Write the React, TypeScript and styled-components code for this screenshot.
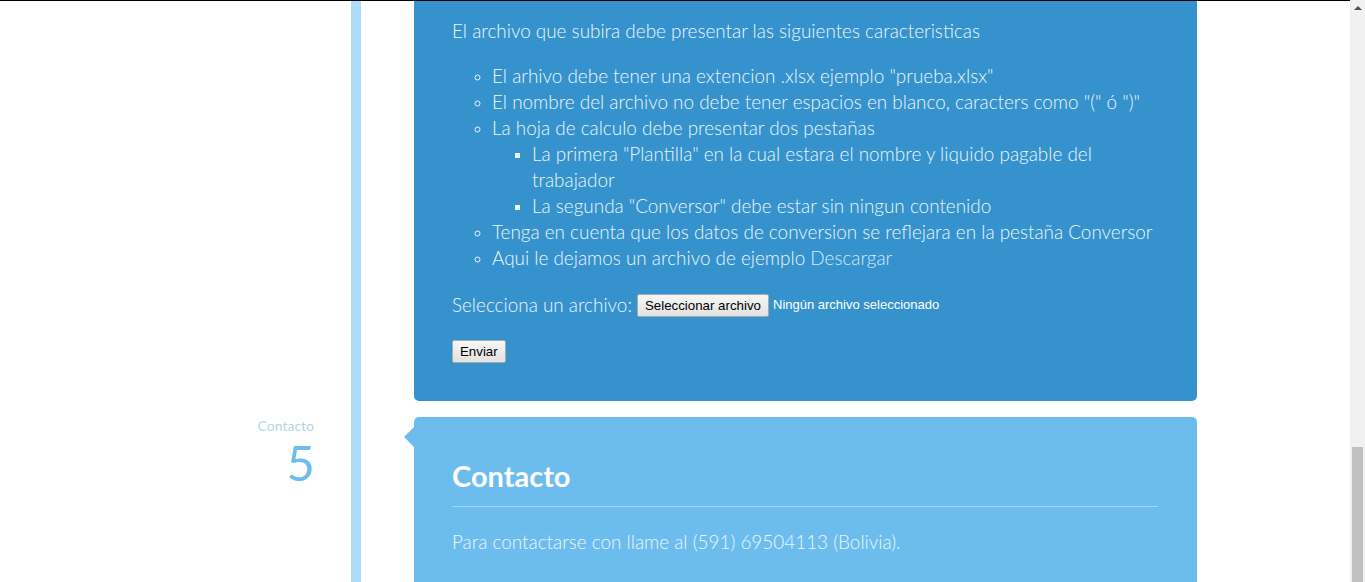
import React from "react";
import styled, { createGlobalStyle } from "styled-components";

const Global = createGlobalStyle`
  html, body { margin: 0; padding: 0; height: 582px; overflow: hidden; background: #fff; }
  body { font-family: Lato, "Open Sans", sans-serif; }
  #root { height: 582px; }
`;

const Frame = styled.div`
  display: flex;
  height: 582px;
`;

const Page = styled.div`
  flex: 1;
  border-top: 1px solid #000;
  overflow: hidden;
`;

const Timeline = styled.div`
  display: grid;
  grid-template-columns: 351px 10px 53px 783px 1fr;
  row-gap: 16px;
`;

const Bar = styled.div`
  grid-column: 2;
  grid-row: 1 / span 2;
  background: #aedcf8;
`;

const Label = styled.div<{ $row: number }>`
  grid-column: 1;
  grid-row: ${(p) => p.$row};
  display: flex;
  flex-direction: column;
  align-items: flex-end;
  padding-right: 37px;
`;

const LabelTitle = styled.span`
  font-size: 14px;
  color: #b6d4ea;
  line-height: 18px;
`;

const LabelNumber = styled.span`
  font-size: 49px;
  font-weight: 400;
  color: #6cbdee;
  line-height: 50px;
  margin-top: 2px;
  margin-right: -1px;
`;

const Card = styled.section<{ $bg: string; $cut?: boolean; $arrow?: boolean; $row: number }>`
  grid-column: 4;
  grid-row: ${(p) => p.$row};
  position: relative;
  background: ${(p) => p.$bg};
  border-radius: ${(p) => (p.$cut ? "0 0 5px 5px" : "5px")};
  padding: ${(p) => (p.$cut ? "17px 39px 38px 38px" : "42px 39px 60px 38px")};
  color: #edf6fc;
  font-weight: 300;
  font-size: 18.9px;
  line-height: 26px;
  ${(p) =>
    p.$arrow &&
    `
    &::before {
      content: "";
      position: absolute;
      left: -10px;
      top: 10px;
      border-style: solid;
      border-width: 10px 10px 10px 0;
      border-color: transparent ${p.$bg} transparent transparent;
    }
  `}
`;

const Para = styled.p`
  margin: 0 0 19px;
`;

const List = styled.ul<{ $square?: boolean }>`
  margin: 0;
  padding-left: 40px;
  list-style-type: ${(p) => (p.$square ? "square" : "circle")};
  li::marker { font-size: 15px; }
`;

const Link = styled.a`
  color: #d6eaf8;
  text-decoration: none;
`;

const FormRow = styled.div`
  display: flex;
  align-items: center;
  margin-top: 21px;
  height: 26px;
`;

const FormLabel = styled.span`
  margin-right: 5px;
`;

const NativeButton = styled.button`
  font-family: "Liberation Sans", Arial, sans-serif;
  font-size: 13.3px;
  font-weight: 400;
  color: #000;
  height: 23px;
  padding: 0 7px;
  border: 1px solid #a9a9a9;
  border-radius: 2px;
  background: linear-gradient(#f6f6f6, #e2e2e2);
  line-height: 21px;
`;

const FileText = styled.span`
  font-family: "Liberation Sans", Arial, sans-serif;
  font-size: 13px;
  font-weight: 400;
  color: #fff;
  margin-left: 4px;
`;

const SubmitRow = styled.div`
  margin-top: 22px;
  display: flex;
`;

const Heading = styled.h2`
  margin: 0;
  font-size: 29px;
  font-weight: 700;
  color: #fff;
  line-height: 34px;
  padding-bottom: 13px;
  border-bottom: 1px solid #a6d6f4;
`;

const ContactText = styled.p`
  margin: 22px 0 0;
  color: #eaf5fc;
`;

const Scrollbar = styled.div`
  width: 15px;
  background: #f1f1f1;
  display: flex;
  flex-direction: column;
  align-items: center;
`;

const ScrollArrow = styled.div`
  margin-top: 6px;
  width: 0;
  height: 0;
  border-left: 4px solid transparent;
  border-right: 4px solid transparent;
  border-bottom: 4px solid #505050;
`;

const Thumb = styled.div`
  margin-top: auto;
  width: 11px;
  height: 135px;
  background: #c1c1c1;
`;

export default function App() {
  return (
    <>
      <Global />
      <Frame>
        <Page>
          <Timeline>
            <Bar />
            <Card $bg="#3592cc" $cut $row={1}>
              <Para>El archivo que subira debe presentar las siguientes caracteristicas</Para>
              <List>
                <li>El arhivo debe tener una extencion .xlsx ejemplo "prueba.xlsx"</li>
                <li>El nombre del archivo no debe tener espacios en blanco, caracters como "(" ó ")"</li>
                <li>
                  La hoja de calculo debe presentar dos pestañas
                  <List $square>
                    <li>La primera "Plantilla" en la cual estara el nombre y liquido pagable del trabajador</li>
                    <li>La segunda "Conversor" debe estar sin ningun contenido</li>
                  </List>
                </li>
                <li>Tenga en cuenta que los datos de conversion se reflejara en la pestaña Conversor</li>
                <li>
                  Aqui le dejamos un archivo de ejemplo <Link href="#">Descargar</Link>
                </li>
              </List>
              <FormRow>
                <FormLabel>Selecciona un archivo:</FormLabel>
                <NativeButton type="button">Seleccionar archivo</NativeButton>
                <FileText>Ningún archivo seleccionado</FileText>
              </FormRow>
              <SubmitRow>
                <NativeButton type="button">Enviar</NativeButton>
              </SubmitRow>
            </Card>
            <Label $row={2}>
              <LabelTitle>Contacto</LabelTitle>
              <LabelNumber>5</LabelNumber>
            </Label>
            <Card $bg="#6cbdee" $arrow $row={2}>
              <Heading>Contacto</Heading>
              <ContactText>Para contactarse con llame al (591) 69504113 (Bolivia).</ContactText>
            </Card>
          </Timeline>
        </Page>
        <Scrollbar>
          <ScrollArrow />
          <Thumb />
        </Scrollbar>
      </Frame>
    </>
  );
}
